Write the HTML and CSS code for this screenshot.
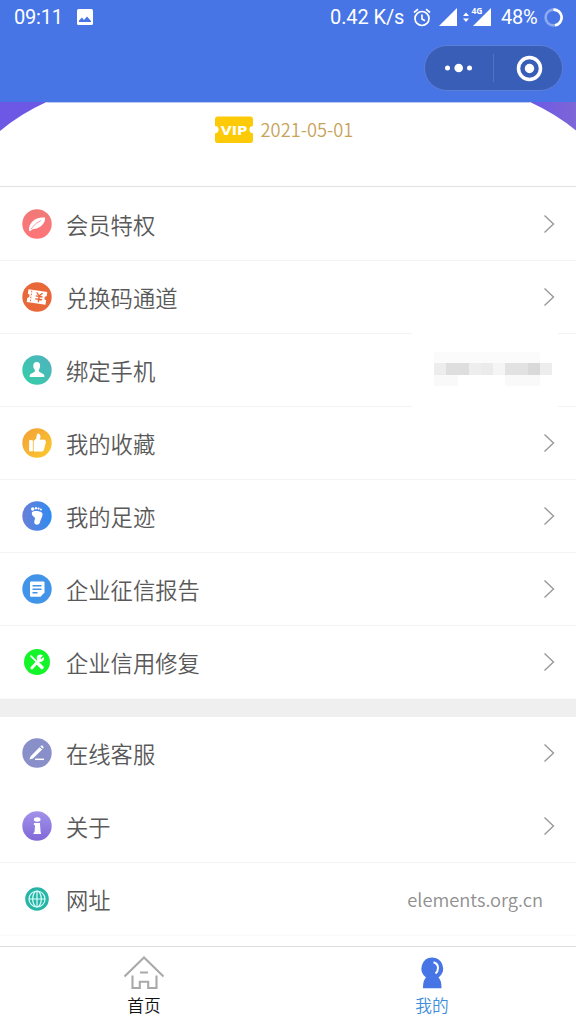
FILE: index.html
```html
<!DOCTYPE html>
<html lang="zh-CN">
<head>
<meta charset="utf-8">
<title>我的</title>
<link rel="stylesheet" href="styles.css">
</head>
<body>
<svg class="defs" width="0" height="0" aria-hidden="true">
  <defs>
    <linearGradient id="pink" x1="0" y1="0" x2="0" y2="1"><stop offset="0" stop-color="#f07a78"/><stop offset="1" stop-color="#ff7478"/></linearGradient>
    <linearGradient id="teal" x1="0" y1="1" x2="1" y2="0"><stop offset="0" stop-color="#35d0a6"/><stop offset="1" stop-color="#4fb0c0"/></linearGradient>
    <linearGradient id="gold" x1="0" y1="0" x2="1" y2="1"><stop offset="0" stop-color="#f3a035"/><stop offset="1" stop-color="#fbc92f"/></linearGradient>
    <linearGradient id="blue" x1="0" y1="0" x2="1" y2="0"><stop offset="0" stop-color="#6a7fd8"/><stop offset="1" stop-color="#2f8bf0"/></linearGradient>
    <linearGradient id="violet" x1="0" y1="0" x2="0" y2="1"><stop offset="0" stop-color="#a292ea"/><stop offset="1" stop-color="#8168d8"/></linearGradient>
    <linearGradient id="cover" x1="0" y1="0" x2="1" y2="0"><stop offset="0" stop-color="#6d58e6"/><stop offset="1" stop-color="#7d66d6"/></linearGradient>
  </defs>
</svg>
<div class="screen">
  <header class="top">
    <div class="status">
      <span class="clock">09:11</span>
      <svg class="picture" width="16" height="16" viewBox="0 0 16 16"><rect width="16" height="16" rx="1.6" fill="#fff"/><path d="M2 13V11.500L5 8.500L7 11L10 7.500L14 12V13Z" fill="#4775e6"/></svg>
      <span class="speed">0.42 K/s</span>
      <svg class="alarm" width="18" height="19" viewBox="0 0 18 19" fill="none" stroke="#fff" stroke-width="1.7"><circle cx="9" cy="10.500" r="7"/><path d="M1 4.500L5 1.200M17 4.500L13 1.200M9 6.500V11L12 12.800"/></svg>
      <svg class="signal" width="18" height="18" viewBox="0 0 18 18"><path d="M18 0V18H0Z" fill="#fff"/></svg>
      <svg class="mobile" width="29" height="27" viewBox="0 -3 29 27"><path d="M29 1V19H11Z" fill="#fff"/><path d="M1 9L4 5.500L7 9ZM1 11.500L4 15L7 11.500Z" fill="#fff"/><text class="gen" x="9.500" y="6.500" textLength="11" lengthAdjust="spacingAndGlyphs">4G</text></svg>
      <span class="percent">48%</span>
      <svg class="battery" width="19" height="19" viewBox="0 0 19 19" fill="none" stroke-width="2.600"><circle cx="9.500" cy="9.500" r="7.900" stroke="#8daaf0"/><path d="M9.500 1.600A7.900 7.900 0 0 1 11 17.300" stroke="#fff"/></svg>
    </div>
    <div class="nav">
      <div class="capsule">
        <svg class="dots" width="68" height="44" viewBox="0 0 68 44" fill="#fff"><circle cx="22.500" cy="22" r="2.500"/><circle cx="33.700" cy="22" r="4.300"/><circle cx="44.500" cy="22" r="2.500"/></svg>
        <span class="split"></span>
        <svg width="68" height="44" viewBox="0 0 68 44"><circle cx="35.500" cy="22.500" r="11" fill="none" stroke="#fff" stroke-width="3.500"/><circle cx="35.500" cy="22.500" r="4.700" fill="#fff"/></svg>
      </div>
    </div>
  </header>

  <section class="profile">
    <svg class="cover" width="576" height="30" viewBox="0 0 576 30"><path d="M0 0H46.500Q20 12 0 29Z" fill="#6d58e6"/><path d="M576 0H530Q556 12 576 28.500Z" fill="url(#cover)"/><path d="M46.500 0.500H530" stroke="#bccbf4" stroke-width="1"/></svg>
    <svg class="vip" width="38" height="27" viewBox="0 0 38 27"><path d="M3 0.500H35A2.600 2.600 0 0 1 38 3V10A3.600 3.600 0 0 0 38 17.200V24A2.600 2.600 0 0 1 35 27H3A2.600 2.600 0 0 1 0 24V17.200A3.600 3.600 0 0 0 0 10V3A2.600 2.600 0 0 1 3 0.500Z" fill="#fdca08"/><text class="vip-text" x="19" y="18.500" text-anchor="middle" textLength="26.500" lengthAdjust="spacingAndGlyphs">VIP</text></svg>
    <span class="date">2021-05-01</span>
  </section>

  <main>
    <div class="group">
      <div class="row"><svg class="icon" viewBox="0 0 30 30"><circle cx="15" cy="15" r="14.700" fill="url(#pink)"/><path d="M7 21.500C6.500 14 13 7.500 23 8.500C24 12 20 20 10.500 20.200L8 22.300Z" fill="#fff"/><path d="M9 20Q13 14 19 11.500" fill="none" stroke="#f9898a" stroke-width=".8"/></svg><span class="label">会员特权</span><svg class="arrow" viewBox="0 0 12 20"><path d="M1.500 1.500L10.500 10L1.500 18.500"/></svg></div>
      <div class="row"><svg class="icon" viewBox="0 0 30 30"><circle cx="15" cy="15" r="14.700" fill="#e8683a"/><g transform="rotate(8 15 15)"><path d="M5.500 8.500H24.500V13A2 2 0 0 0 24.500 17V21.500H5.500V17A2 2 0 0 0 5.500 13Z" fill="#fff"/><path d="M9 9.500V21" stroke="#e8683a" stroke-width="1" stroke-dasharray="1.600 1.400"/><path d="M14 10.500L17 13.500L20 10.500M13.500 14H20.500M13.500 17H20.500M17 13.500V20" fill="none" stroke="#e8683a" stroke-width="1.300"/></g></svg><span class="label">兑换码通道</span><svg class="arrow" viewBox="0 0 12 20"><path d="M1.500 1.500L10.500 10L1.500 18.500"/></svg></div>
      <div class="row masked"><svg class="icon" viewBox="0 0 30 30"><circle cx="15" cy="15" r="14.700" fill="url(#teal)"/><path d="M14.700 7C17.300 7 18.500 9 18.100 11.500C17.900 13.300 17 14.200 16.700 15.500C17 18 21.800 17.800 22.300 20.500V22H7.700V20.500C8.200 17.800 13 18 13 15.500C12.500 14.200 11.500 13.300 11.300 11.500C11 9 12.200 7 14.700 7Z" fill="#fff"/></svg><span class="label">绑定手机</span>
        <svg class="mosaic" width="118" height="36" viewBox="0 0 118 36"><path d="M0 1H106V12H0Z" fill="#fbfbfb"/><path d="M0 24H24V35H0ZM71 24H106V35H71Z" fill="#f9f9f9"/><path d="M0 12H12V24H0ZM106 12H118V24H106Z" fill="#ededed"/><path d="M12 12H35V24H12Z" fill="#dedede"/><path d="M35 12H59V24H35Z" fill="#eee"/><path d="M47 12H59V24H47Z" fill="#ebebeb"/><path d="M59 12H71V24H59Z" fill="#f5f5f5"/><path d="M71 12H94V24H71Z" fill="#e2e2e2"/><path d="M94 12H106V24H94Z" fill="#d9d9d9"/></svg></div>
      <div class="row"><svg class="icon" viewBox="0 0 30 30"><circle cx="15" cy="15" r="14.700" fill="url(#gold)"/><path d="M7.500 12.500H10.500V23H7.500ZM12 13L14.500 10.500L15.500 6Q18 5.300 18.200 8.500L17.500 12H22.500Q24 12.500 23.500 14.500L21.500 22Q21 23.200 19.500 23.200H12Z" fill="#fff" stroke="#fff" stroke-width=".7" stroke-linejoin="round"/></svg><span class="label">我的收藏</span><svg class="arrow" viewBox="0 0 12 20"><path d="M1.500 1.500L10.500 10L1.500 18.500"/></svg></div>
      <div class="row"><svg class="icon" viewBox="0 0 30 30"><circle cx="15" cy="15" r="14.700" fill="url(#blue)"/><g fill="#fff"><circle cx="10.700" cy="8" r="1.700"/><circle cx="14" cy="7.200" r="1.200"/><circle cx="16.600" cy="7.600" r="1.100"/><circle cx="18.900" cy="8.600" r="1"/><path d="M9.800 12C10 9 20.500 9.500 20.500 13C20.800 16 18.500 18 18 21C17.500 24.500 12.300 24.500 12.200 21C12.200 19.500 13.300 18.500 12.800 16.800C12.300 15.500 9.600 15 9.800 12Z"/></g></svg><span class="label">我的足迹</span><svg class="arrow" viewBox="0 0 12 20"><path d="M1.500 1.500L10.500 10L1.500 18.500"/></svg></div>
      <div class="row"><svg class="icon" viewBox="0 0 30 30"><circle cx="15" cy="15" r="14.700" fill="#4194e8"/><path d="M9 7.500H21.500Q22.500 7.500 22.500 8.500V18.500L18.500 22.700H9Q8 22.700 8 21.700V8.500Q8 7.500 9 7.500Z" fill="#fff"/><path d="M10.500 11.800H19.500M10.500 15.300H19.500M10.500 18.800H15.500" stroke="#4194e8" stroke-width="1.500"/></svg><span class="label">企业征信报告</span><svg class="arrow" viewBox="0 0 12 20"><path d="M1.500 1.500L10.500 10L1.500 18.500"/></svg></div>
      <div class="row"><svg class="icon" viewBox="0 0 30 30"><circle cx="15" cy="15" r="13" fill="#13f529"/><path d="M9.800 21L17.500 12.800" stroke="#fff" stroke-width="2.800" stroke-linecap="round"/><path d="M20.900 8.600L18.500 11L19.300 12L21.900 10A3.700 3.700 0 1 1 20.200 8" fill="#fff"/><path d="M9 9.200L15 15.200" stroke="#fff" stroke-width="1.700" stroke-linecap="round"/><path d="M16 16.500L20 20.500" stroke="#fff" stroke-width="3.400" stroke-linecap="round"/></svg><span class="label">企业信用修复</span><svg class="arrow" viewBox="0 0 12 20"><path d="M1.500 1.500L10.500 10L1.500 18.500"/></svg></div>
    </div>
    <div class="group second">
      <div class="row plain"><svg class="icon" viewBox="0 0 30 30"><circle cx="15" cy="15" r="14.700" fill="#898fc9"/><path d="M8.500 18.500L17.500 9.200L20.200 11.600L11 20.500L7.500 21.600ZM18.300 8.400L19 7.700Q20.500 7 21.400 8.700Q21.900 9.700 21 10.700Z" fill="#fff"/><path d="M13 21.300H22" stroke="#fff" stroke-width="1.500"/></svg><span class="label">在线客服</span><svg class="arrow" viewBox="0 0 12 20"><path d="M1.500 1.500L10.500 10L1.500 18.500"/></svg></div>
      <div class="row"><svg class="icon" viewBox="0 0 30 30"><circle cx="15" cy="15" r="14.700" fill="url(#violet)"/><ellipse cx="15.200" cy="8.500" rx="3.300" ry="2.200" fill="#fff"/><path d="M12 12H17.900L18.600 20.800L19.200 22.900H11.100L12.600 20.600L13 14.500L11.800 13.800Z" fill="#fff"/></svg><span class="label">关于</span><svg class="arrow" viewBox="0 0 12 20"><path d="M1.500 1.500L10.500 10L1.500 18.500"/></svg></div>
      <div class="row"><svg class="icon" viewBox="0 0 30 30"><circle cx="15" cy="15" r="11.800" fill="#29b5a6"/><g fill="none" stroke="#d8fffb" stroke-width="1.200"><circle cx="15" cy="15" r="8"/><ellipse cx="15" cy="15" rx="4.300" ry="8"/><path d="M7 15H23M15 7V23"/></g></svg><span class="label">网址</span><span class="site">elements.org.cn</span></div>
    </div>
  </main>

  <nav class="tabs">
    <div class="tab"><svg width="42" height="36" viewBox="0 0 42 36" fill="none" stroke="#a9a9a9" stroke-width="2.100"><path d="M1.500 21.500L21 2.500L40.500 21.500M9.500 20.500V33H16.800V26.700H25.200V33H33.500V20.500M17 17.500H25"/></svg><span>首页</span></div>
    <div class="tab active"><svg width="42" height="36" viewBox="0 0 42 36"><path d="M21 2.500A11 11 0 0 1 27.500 22.400Q30.500 25 30.500 33.200H12Q12 25 15 22.400A11 11 0 0 1 21 2.500Z" fill="#4775e6"/><path d="M22.500 7.300Q27 8.500 27 13Q27 16.500 24.500 18.500" fill="none" stroke="#fff" stroke-width="2"/></svg><span>我的</span></div>
  </nav>
</div>
</body>
</html>
```
FILE: styles.css
```css
* { box-sizing: border-box; }
body {
  margin: 0;
  background: #fff;
  font-family: "Noto Sans CJK SC", sans-serif;
  font-weight: 350;
}
svg { display: block; flex: none; }
.defs { position: absolute; }
.screen {
  width: 576px;
  height: 1024px;
  display: flex;
  flex-direction: column;
  overflow: hidden;
}
.top { height: 102px; flex: none; background: #4775e6; }
.status {
  height: 34px;
  padding: 0 13px 0 14px;
  display: flex;
  align-items: center;
  color: #fff;
  font: 20px/35px Roboto, sans-serif;
}
.clock { width: 63px; letter-spacing: -.2px; }
.speed { margin-left: auto; width: 83px; letter-spacing: -.1px; }
.alarm { margin-right: 8px; }
.mobile { margin: 0 10px 0 5px; overflow: visible; }
.percent { width: 43px; letter-spacing: -.2px; }
.gen { font: 700 8px "Open Sans", sans-serif; fill: #fff; }
.nav { height: 68px; padding: 11px 13px 0; display: flex; justify-content: flex-end; }
.capsule {
  width: 139px;
  height: 46px;
  border: 1px solid #5b7fd6;
  border-radius: 23px;
  background: #395eb8;
  display: flex;
  align-items: center;
}
.split { width: 1px; height: 28px; background: #5374c3; }
.profile {
  position: relative;
  height: 85px;
  flex: none;
  padding: 14px 8px 0 0;
  border-bottom: 1px solid #e2e2e2;
  display: flex;
  justify-content: center;
  align-items: flex-start;
  gap: 8px;
}
.cover { position: absolute; top: 0; left: 0; }
.vip-text { font: 700 13px "DejaVu Sans", sans-serif; fill: #fff; }
.date { font-size: 18.3px; line-height: 26px; color: #c8a35a; }
main { flex: none; padding-top: 1px; }
.second { border-top: 18px solid #efefef; }
.row {
  height: 73px;
  padding: 0 21px 0 22px;
  border-bottom: 1px solid #f3f3f3;
  display: flex;
  align-items: center;
}
.row:last-child { border-bottom-color: #fafafa; }
.row.plain { border-bottom-color: transparent; }
.icon { width: 30px; height: 30px; margin-right: 14px; }
.label { flex: 1; font-size: 22.3px; line-height: 32px; color: #595959; }
.arrow { width: 12px; height: 20px; fill: none; stroke: #999; stroke-width: 1.4; }
.masked { position: relative; }
/* blank patch that hides the dividers around the pixelated number */
.masked::before {
  content: "";
  position: absolute;
  top: -1px;
  right: 18px;
  bottom: -1px;
  width: 146px;
  background: #fff;
}
.mosaic { position: relative; margin: 0 3px 2px 0; }
.site { margin-right: 12px; font-size: 18.3px; color: #8f8f8f; }
.tabs {
  margin-top: auto;
  height: 78px;
  flex: none;
  border-top: 1px solid #dedede;
  display: flex;
}
.tab {
  flex: 1;
  padding-top: 8px;
  display: flex;
  flex-direction: column;
  align-items: center;
  font-size: 16.7px;
  line-height: 28px;
  color: #111;
}
.tab.active { color: #3f8edc; }
```
